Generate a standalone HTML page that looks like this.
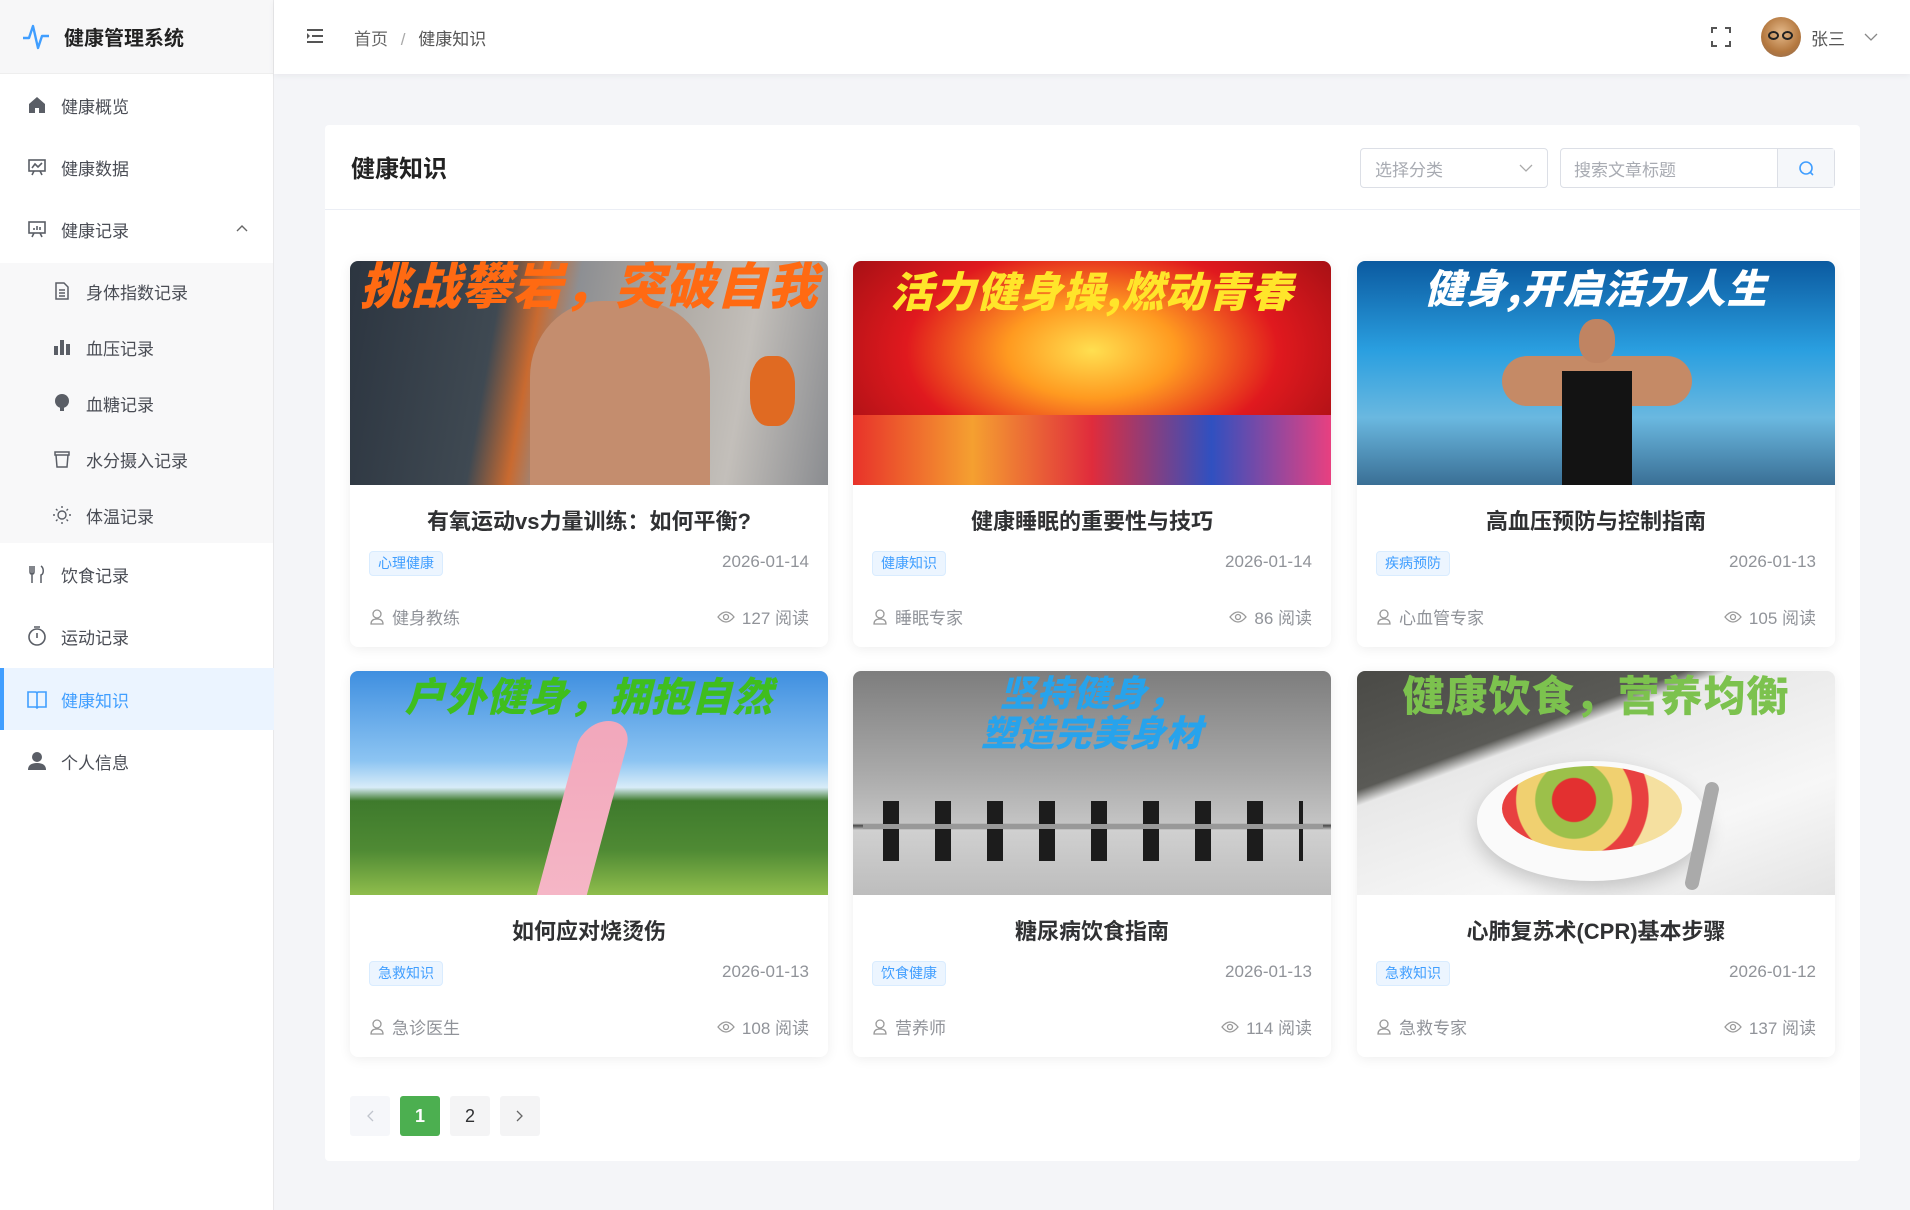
<!DOCTYPE html>
<html><head><meta charset="utf-8"><style>
*{margin:0;padding:0;box-sizing:border-box}
body{width:1910px;height:1210px;overflow:hidden;background:#f4f5f8;font-family:"Liberation Sans","Noto Sans CJK SC",sans-serif;color:#303133;position:relative}
.side{position:absolute;left:0;top:0;width:274px;height:1210px;background:#fff;border-right:1px solid #e8e8ea}
.logo{height:74px;background:#f7f7f8;border-bottom:1px solid #eee;display:flex;align-items:center;padding-left:22px;font-size:20px;font-weight:bold;color:#222}
.logo svg{margin-right:14px}
.mi{position:absolute;left:0;width:274px;height:62px;display:flex;align-items:center;font-size:17px;color:#4a4d55}
.mi .ic{position:absolute;left:26px;width:22px;height:22px}
.mi span{position:absolute;left:61px}
.sub{position:absolute;left:0;top:263px;width:273px;height:280px;background:#f8f8f9}
.si{position:absolute;left:0;width:273px;height:56px;display:flex;align-items:center;font-size:17px;color:#4a4d55}
.si .ic{position:absolute;left:52px;width:20px;height:20px}
.si span{position:absolute;left:86px}
.active{background:#ebf4ff;color:#409eff!important}
.active:before{content:"";position:absolute;left:0;top:0;width:4px;height:100%;background:#409eff}
.hdr{position:absolute;left:274px;top:0;right:0;height:74px;background:#fff;box-shadow:0 2px 6px rgba(0,0,0,.05)}
.main{position:absolute;left:325px;top:125px;width:1535px;height:1036px;background:#fff;border-radius:4px}
.mh{height:85px;border-bottom:1px solid #ebeef5;position:relative}
.mh h2{position:absolute;left:26px;top:24px;font-size:24px;font-weight:bold;color:#222}
.sel{position:absolute;left:1035px;top:23px;width:188px;height:40px;border:1px solid #dcdfe6;border-radius:4px;font-size:17px;color:#a8abb2;padding:7px 14px}
.srch{position:absolute;left:1235px;top:23px;width:275px;height:40px;border:1px solid #dcdfe6;border-radius:4px;font-size:17px;color:#a8abb2;padding:7px 13px}
.srch .b{position:absolute;right:0;top:0;width:57px;height:38px;background:#f5f7fa;border-left:1px solid #dcdfe6}
.card{position:absolute;width:478px;height:386px;background:#fff;border-radius:8px;box-shadow:0 2px 12px rgba(0,0,0,.07);overflow:hidden}
.img{height:224px;position:relative;overflow:hidden}
.img .t{position:absolute;left:0;right:0;text-align:center;font-weight:900;font-style:italic;font-family:"Noto Sans CJK SC",sans-serif;letter-spacing:1px}
.ct{position:absolute;top:243px;width:100%;text-align:center;font-size:22px;font-weight:bold;color:#303133}
.tag{position:absolute;left:19px;top:290px;height:25px;padding:0 8px;border:1px solid #d9ecff;background:#ecf5ff;color:#409eff;border-radius:4px;font-size:14px;line-height:23px}
.dt{position:absolute;right:19px;top:291px;font-size:17px;color:#909399}
.au{position:absolute;left:20px;top:343px;font-size:17px;color:#909399;display:flex;align-items:center;gap:8px}
.rd{position:absolute;right:19px;top:343px;font-size:17px;color:#909399;display:flex;align-items:center;gap:7px}
.pg{position:absolute;top:1096px;width:40px;height:40px;border-radius:3px;background:#f4f4f5;font-size:18px;display:flex;align-items:center;justify-content:center;color:#303133}
</style></head><body>
<div class="side">
 <div class="logo"><svg width="28" height="30" viewBox="0 0 28 30"><path d="M1 16h6l4-12 5 22 4-12h7" fill="none" stroke="#409eff" stroke-width="2.4" stroke-linejoin="round"/></svg>健康管理系统</div>
 <div class="mi" style="top:74px"><svg class="ic" viewBox="0 0 22 22"><path d="M3 10l8-7 8 7v9h-6v-5h-4v5H3z" fill="#5a5e66"/></svg><span>健康概览</span></div>
 <div class="mi" style="top:136px"><svg class="ic" viewBox="0 0 22 22" fill="none" stroke="#5a5e66" stroke-width="1.6"><rect x="3" y="4" width="16" height="11"/><path d="M6 12l3-4 3 3 4-4M8 15l-2 4M14 15l2 4"/></svg><span>健康数据</span></div>
 <div class="mi" style="top:198px"><svg class="ic" viewBox="0 0 22 22" fill="none" stroke="#5a5e66" stroke-width="1.6"><rect x="3" y="4" width="16" height="11"/><path d="M8 12v-2M11 12V8M14 12v-3M8 15l-2 4M14 15l2 4"/></svg><span>健康记录</span><svg style="position:absolute;left:235px" width="14" height="10" viewBox="0 0 14 10"><path d="M2 7l5-5 5 5" fill="none" stroke="#666" stroke-width="1.4"/></svg></div>
 <div class="sub">
  <div class="si" style="top:0"><svg class="ic" viewBox="0 0 20 20" fill="none" stroke="#5a5e66" stroke-width="1.5"><path d="M4 2h8l4 4v12H4zM7 9h6M7 12h6M7 15h6"/></svg><span>身体指数记录</span></div>
  <div class="si" style="top:56px"><svg class="ic" viewBox="0 0 20 20" fill="#5a5e66"><rect x="2" y="9" width="4" height="9"/><rect x="8" y="3" width="4" height="15"/><rect x="14" y="7" width="4" height="11"/></svg><span>血压记录</span></div>
  <div class="si" style="top:112px"><svg class="ic" viewBox="0 0 20 20" fill="#5a5e66"><circle cx="10" cy="8" r="7"/><rect x="8" y="14" width="4" height="4"/></svg><span>血糖记录</span></div>
  <div class="si" style="top:168px"><svg class="ic" viewBox="0 0 20 20" fill="none" stroke="#5a5e66" stroke-width="1.5"><path d="M3 3h14v3H3zM4 6l1 12h10l1-12"/></svg><span>水分摄入记录</span></div>
  <div class="si" style="top:224px"><svg class="ic" viewBox="0 0 20 20" fill="none" stroke="#5a5e66" stroke-width="1.4"><circle cx="10" cy="10" r="4"/><path d="M10 1v2M10 17v2M1 10h2M17 10h2M4 4l1.5 1.5M14.5 14.5L16 16M4 16l1.5-1.5M14.5 5.5L16 4"/></svg><span>体温记录</span></div>
 </div>
 <div class="mi" style="top:543px"><svg class="ic" viewBox="0 0 22 22" fill="none" stroke="#5a5e66" stroke-width="1.5"><path d="M4 3v6q0 2 2 2M8 3v6q0 2-2 2M6 3v17M15 3c3 2 3 8 0 9v8"/></svg><span>饮食记录</span></div>
 <div class="mi" style="top:605px"><svg class="ic" viewBox="0 0 22 22" fill="none" stroke="#5a5e66" stroke-width="1.6"><circle cx="11" cy="12" r="8"/><path d="M11 8v5M8 2h6"/></svg><span>运动记录</span></div>
 <div class="mi active" style="top:668px"><svg class="ic" viewBox="0 0 22 22" fill="none" stroke="#409eff" stroke-width="1.6"><path d="M2 4h8l1 1 1-1h8v15h-8l-1 1-1-1H2zM11 5v14"/></svg><span>健康知识</span></div>
 <div class="mi" style="top:730px"><svg class="ic" viewBox="0 0 22 22" fill="#5a5e66"><circle cx="11" cy="7" r="5"/><path d="M2 20q0-7 9-7t9 7z"/></svg><span>个人信息</span></div>
</div>
<div class="hdr">
 <svg style="position:absolute;left:33px;top:29px" width="16" height="14" viewBox="0 0 16 14" fill="#555"><rect x="0" y="0" width="16" height="2"/><rect x="5" y="6" width="11" height="2"/><rect x="0" y="12" width="16" height="2"/><path d="M0 4l3 3-3 3z"/></svg>
 <div style="position:absolute;left:80px;top:25px;font-size:17px;color:#666">首页 <span style="color:#aaa;margin:0 8px">/</span> <span style="color:#555">健康知识</span></div>
 <svg style="position:absolute;left:1437px;top:27px" width="20" height="20" viewBox="0 0 20 20" fill="none" stroke="#555" stroke-width="2"><path d="M1 6V1h5M14 1h5v5M19 14v5h-5M6 19H1v-5"/></svg>
 <div style="position:absolute;left:1487px;top:17px;width:40px;height:40px;border-radius:50%;background:radial-gradient(circle at 50% 40%,#e4b98a,#b4783f 60%,#8a6a55)"><div style="position:absolute;left:7px;top:14px;width:11px;height:9px;border:2px solid #222;border-radius:50%"></div><div style="position:absolute;left:21px;top:14px;width:11px;height:9px;border:2px solid #222;border-radius:50%"></div></div>
 <div style="position:absolute;left:1537px;top:25px;font-size:17px;color:#555">张三</div>
 <svg style="position:absolute;left:1590px;top:33px" width="14" height="9" viewBox="0 0 14 9"><path d="M1 1l6 6 6-6" fill="none" stroke="#888" stroke-width="1.3"/></svg>
</div>
<div class="main">
 <div class="mh"><h2>健康知识</h2>
  <div class="sel">选择分类<svg style="position:absolute;right:14px;top:15px" width="14" height="9" viewBox="0 0 14 9"><path d="M1 1l6 6 6-6" fill="none" stroke="#aaa" stroke-width="1.3"/></svg></div>
  <div class="srch">搜索文章标题<div class="b"><svg style="position:absolute;left:20px;top:11px" width="17" height="17" viewBox="0 0 17 17" fill="none" stroke="#409eff" stroke-width="1.6"><circle cx="8" cy="8" r="6"/><path d="M12 12l3 3"/></svg></div></div>
 </div>
</div>

<div class="card" style="left:350px;top:261px"><div class="img" style="background:linear-gradient(100deg,#2c3540 0%,#3f4952 30%,#c96a30 38%,#8d8f93 45%,#a9a49e 60%,#c3bfba 80%,#8a8c90 100%)">
 <div style="position:absolute;left:180px;top:40px;width:180px;height:190px;border-radius:40% 40% 0 0;background:#c48d6e"></div>
 <div style="position:absolute;left:400px;top:95px;width:45px;height:70px;border-radius:40%;background:#e06a22"></div>
 <div class="t" style="top:-14px;font-size:50px;color:#ff6a12">挑战攀岩，突破自我</div></div>
 <div class="ct">有氧运动vs力量训练：如何平衡?</div><div class="tag">心理健康</div><div class="dt">2026-01-14</div>
 <div class="au"><svg width="14" height="16" viewBox="0 0 14 16" fill="none" stroke="#999" stroke-width="1.3"><circle cx="7" cy="5" r="4"/><path d="M1 15q0-5 6-5t6 5z"/></svg>健身教练</div>
 <div class="rd"><svg width="18" height="12" viewBox="0 0 18 12" fill="none" stroke="#999" stroke-width="1.3"><path d="M1 6q8-10 16 0q-8 10-16 0z"/><circle cx="9" cy="6" r="2.5"/></svg>127 阅读</div></div>

<div class="card" style="left:853px;top:261px"><div class="img" style="background:radial-gradient(ellipse at 50% 40%,#ffdf50 0%,#ff9a20 25%,#e0191e 55%,#8a0c10 100%)">
 <div style="position:absolute;left:0;right:0;bottom:0;height:70px;background:linear-gradient(90deg,#e8322a,#f5a030,#e02c3c,#3050c0,#e84080)"></div>
 <div class="t" style="top:-2px;font-size:42px;color:#ffe52a">活力健身操,燃动青春</div></div>
 <div class="ct">健康睡眠的重要性与技巧</div><div class="tag">健康知识</div><div class="dt">2026-01-14</div>
 <div class="au"><svg width="14" height="16" viewBox="0 0 14 16" fill="none" stroke="#999" stroke-width="1.3"><circle cx="7" cy="5" r="4"/><path d="M1 15q0-5 6-5t6 5z"/></svg>睡眠专家</div>
 <div class="rd"><svg width="18" height="12" viewBox="0 0 18 12" fill="none" stroke="#999" stroke-width="1.3"><path d="M1 6q8-10 16 0q-8 10-16 0z"/><circle cx="9" cy="6" r="2.5"/></svg>86 阅读</div></div>

<div class="card" style="left:1357px;top:261px"><div class="img" style="background:linear-gradient(180deg,#0b5aa0 0%,#2a9fe0 40%,#6ab8e0 70%,#3a6f95 100%)">
 <div style="position:absolute;left:145px;top:95px;width:190px;height:50px;border-radius:25px;background:#c58a66"></div>
 <div style="position:absolute;left:205px;top:110px;width:70px;height:114px;background:#131313"></div>
 <div style="position:absolute;left:222px;top:58px;width:36px;height:44px;border-radius:45%;background:#c08462"></div>
 <div class="t" style="top:-4px;font-size:40px;color:#fff">健身,开启活力人生</div></div>
 <div class="ct">高血压预防与控制指南</div><div class="tag">疾病预防</div><div class="dt">2026-01-13</div>
 <div class="au"><svg width="14" height="16" viewBox="0 0 14 16" fill="none" stroke="#999" stroke-width="1.3"><circle cx="7" cy="5" r="4"/><path d="M1 15q0-5 6-5t6 5z"/></svg>心血管专家</div>
 <div class="rd"><svg width="18" height="12" viewBox="0 0 18 12" fill="none" stroke="#999" stroke-width="1.3"><path d="M1 6q8-10 16 0q-8 10-16 0z"/><circle cx="9" cy="6" r="2.5"/></svg>105 阅读</div></div>

<div class="card" style="left:350px;top:671px"><div class="img" style="background:linear-gradient(180deg,#3f8fe0 0%,#8cc4f2 40%,#d8ecf8 52%,#3e7a2c 58%,#4f8a34 80%,#8fbd4c 100%)">
 <div style="position:absolute;left:210px;top:50px;width:50px;height:175px;background:linear-gradient(180deg,#f2a7bb,#f5b6c6);border-radius:30px 30px 0 0;transform:skewX(-15deg)"></div>
 <div class="t" style="top:-6px;font-size:40px;color:#3fbe1e">户外健身，拥抱自然</div></div>
 <div class="ct">如何应对烧烫伤</div><div class="tag">急救知识</div><div class="dt">2026-01-13</div>
 <div class="au"><svg width="14" height="16" viewBox="0 0 14 16" fill="none" stroke="#999" stroke-width="1.3"><circle cx="7" cy="5" r="4"/><path d="M1 15q0-5 6-5t6 5z"/></svg>急诊医生</div>
 <div class="rd"><svg width="18" height="12" viewBox="0 0 18 12" fill="none" stroke="#999" stroke-width="1.3"><path d="M1 6q8-10 16 0q-8 10-16 0z"/><circle cx="9" cy="6" r="2.5"/></svg>108 阅读</div></div>

<div class="card" style="left:853px;top:671px"><div class="img" style="background:linear-gradient(180deg,#7d7d7d 0%,#a9a9a9 45%,#c4c4c4 68%,#4a4a4a 69%,#d0d0d0 71%,#bdbdbd 100%)">
 <div style="position:absolute;left:30px;top:130px;width:420px;height:60px;background:repeating-linear-gradient(90deg,#1c1c1c 0 16px,transparent 16px 52px)"></div>
 <div style="position:absolute;left:10px;top:153px;width:460px;height:5px;background:#999"></div>
 <div class="t" style="top:0;font-size:36px;line-height:40px;color:#27a3ec">坚持健身，<br>塑造完美身材</div></div>
 <div class="ct">糖尿病饮食指南</div><div class="tag">饮食健康</div><div class="dt">2026-01-13</div>
 <div class="au"><svg width="14" height="16" viewBox="0 0 14 16" fill="none" stroke="#999" stroke-width="1.3"><circle cx="7" cy="5" r="4"/><path d="M1 15q0-5 6-5t6 5z"/></svg>营养师</div>
 <div class="rd"><svg width="18" height="12" viewBox="0 0 18 12" fill="none" stroke="#999" stroke-width="1.3"><path d="M1 6q8-10 16 0q-8 10-16 0z"/><circle cx="9" cy="6" r="2.5"/></svg>114 阅读</div></div>

<div class="card" style="left:1357px;top:671px"><div class="img" style="background:linear-gradient(160deg,#4a4a46 0%,#5a5a56 30%,#e8e8e8 34%,#f7f7f7 70%,#e4e4e4 100%)">
 <div style="position:absolute;left:120px;top:90px;width:230px;height:120px;border-radius:50%;background:#fafafa;box-shadow:0 8px 20px rgba(0,0,0,.2)"></div>
 <div style="position:absolute;left:145px;top:95px;width:180px;height:85px;border-radius:50%;background:radial-gradient(circle at 40% 40%,#e33030 0 18%,#9cc04a 19% 32%,#f0d070 33% 48%,#e84040 49% 62%,#f5e0a0 63%)"></div>
 <div style="position:absolute;left:338px;top:110px;width:14px;height:110px;border-radius:7px;background:#aaa;transform:rotate(12deg)"></div>
 <div class="t" style="top:-8px;font-size:42px;color:#7cc24e;font-style:normal">健康饮食，营养均衡</div></div>
 <div class="ct">心肺复苏术(CPR)基本步骤</div><div class="tag">急救知识</div><div class="dt">2026-01-12</div>
 <div class="au"><svg width="14" height="16" viewBox="0 0 14 16" fill="none" stroke="#999" stroke-width="1.3"><circle cx="7" cy="5" r="4"/><path d="M1 15q0-5 6-5t6 5z"/></svg>急救专家</div>
 <div class="rd"><svg width="18" height="12" viewBox="0 0 18 12" fill="none" stroke="#999" stroke-width="1.3"><path d="M1 6q8-10 16 0q-8 10-16 0z"/><circle cx="9" cy="6" r="2.5"/></svg>137 阅读</div></div>

<div class="pg" style="left:350px;background:#f6f7fa"><svg width="8" height="12" viewBox="0 0 8 12"><path d="M7 1L2 6l5 5" fill="none" stroke="#c0c4cc" stroke-width="1.3"/></svg></div>
<div class="pg" style="left:400px;background:#4caf50;color:#fff;font-weight:bold">1</div>
<div class="pg" style="left:450px">2</div>
<div class="pg" style="left:500px"><svg width="8" height="12" viewBox="0 0 8 12"><path d="M1 1l5 5-5 5" fill="none" stroke="#666" stroke-width="1.3"/></svg></div>
</body></html>
